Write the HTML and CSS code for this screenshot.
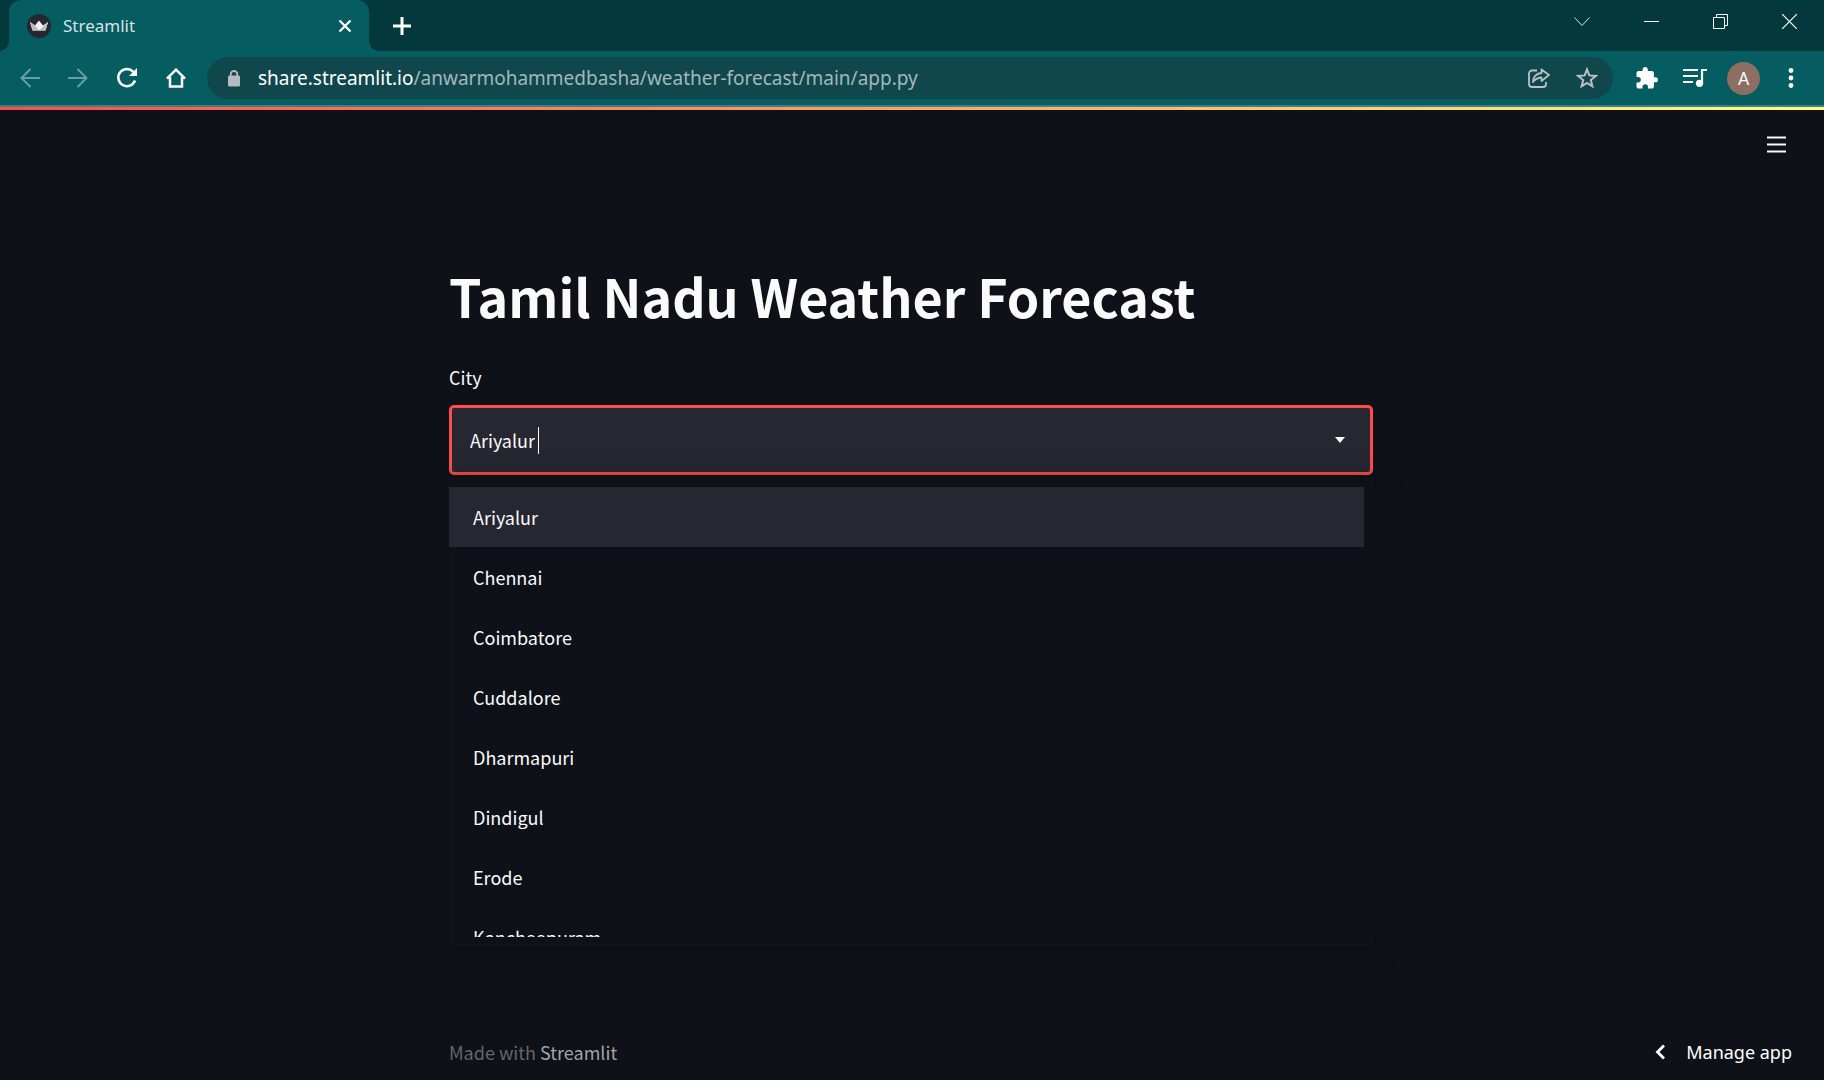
FILE: index.html
```html
<!DOCTYPE html>
<html lang="en">
<head>
<meta charset="utf-8">
<title>Streamlit</title>
<link rel="stylesheet" href="styles.css">
</head>
<body>
<header class="browser">
  <div class="tabstrip">
    <div class="tab">
      <svg class="favicon" width="24" height="24" viewBox="0 0 24 24"><circle cx="12" cy="12" r="12" fill="#262730"/><path d="M3 8 8 11.500 12 6.500l4 5 5-3.500-2.500 8.500H5.500z" fill="#f2f2f2"/><path d="M8 11.500 12 16.500H5.500L3 8zM21 8l-2.500 8.500H12z" fill="#bdbdc0"/></svg>
      <span class="tab-title">Streamlit</span>
      <button class="icon-btn" aria-label="Close tab"><svg width="14" height="14" viewBox="0 0 14 14" stroke="#fff" stroke-width="2.200"><path d="M1.500 1.500l11 11M12.500 1.500l-11 11"/></svg></button>
    </div>
    <button class="icon-btn new-tab" aria-label="New tab"><svg width="18" height="18" viewBox="0 0 18 18" stroke="#fff" stroke-width="3"><path d="M9 0v18M0 9h18"/></svg></button>
    <div class="window-controls">
      <button class="icon-btn" aria-label="Search tabs"><svg width="16" height="10" viewBox="0 0 16 10" fill="none" stroke="#d5dfe0"><path d="M.5.5 8 8.500 15.500.5"/></svg></button>
      <button class="icon-btn" aria-label="Minimize"><svg width="15" height="15" viewBox="0 0 15 15" stroke="#fff"><path d="M0 7.500h15"/></svg></button>
      <button class="icon-btn" aria-label="Restore"><svg width="15" height="15" viewBox="0 0 15 15" fill="none" stroke="#fff"><path d="M.5 3.500h11v11H.5zM3.500 3.500v-3h11v11h-3"/></svg></button>
      <button class="icon-btn" aria-label="Close"><svg width="15" height="15" viewBox="0 0 15 15" stroke="#fff" stroke-width="1.200"><path d="M0 0l15 15M15 0 0 15"/></svg></button>
    </div>
  </div>
  <div class="toolbar">
    <nav class="nav-buttons">
      <button class="icon-btn" aria-label="Back"><svg width="20" height="20" viewBox="0 0 20 20" fill="none" stroke="#699fa1" stroke-width="2"><path d="M20 10H2M10.500 1 1.500 10l9 9"/></svg></button>
      <button class="icon-btn" aria-label="Forward"><svg width="20" height="20" viewBox="0 0 20 20" fill="none" stroke="#699fa1" stroke-width="2"><path d="M0 10h18M9.500 1l9 9-9 9"/></svg></button>
      <button class="icon-btn" aria-label="Reload"><svg width="22" height="22" viewBox="0 0 22 22" fill="none" stroke="#fff" stroke-width="2.500"><path d="M19 13.500A8.600 8.600 0 1 1 17.500 5"/><path d="M21 1v8h-8z" fill="#fff" stroke="none"/></svg></button>
      <button class="icon-btn" aria-label="Home"><svg width="20" height="20" viewBox="0 0 20 20" fill="none" stroke="#fff" stroke-width="2.500"><path d="M1 10.700 10 1.700l9 9M4 9v9.500h12V9"/></svg></button>
    </nav>
    <div class="omnibox">
      <svg width="12" height="17" viewBox="0 0 12 17"><path d="M2.700 7V4.300a3.300 3.300 0 0 1 6.600 0V7" fill="none" stroke="#b4bcbf" stroke-width="1.800"/><rect y="5.500" width="12" height="11" rx="1.500" fill="#b4bcbf"/></svg>
      <a class="url" href="#"><span class="host">share.streamlit.io</span>/anwarmohammedbasha/weather-forecast/main/app.py</a>
      <button class="icon-btn" aria-label="Share"><svg width="22" height="20" viewBox="0 0 22 20" fill="none" stroke="#b9c1c3" stroke-width="1.800" stroke-linejoin="round"><path d="M9 2.500H4a3 3 0 0 0-3 3V16a3 3 0 0 0 3 3h11a3 3 0 0 0 3-3v-2"/><path d="M13.500 1.500 21 7l-7.500 6V9.500C10 9.500 7.500 11 5 14c0-5 3.500-8.800 8.500-9z"/></svg></button>
      <button class="icon-btn" aria-label="Bookmark"><svg width="22" height="22" viewBox="0 0 22 22" fill="none" stroke="#b9c1c3" stroke-width="2"><path d="M11 2.400l2.300 6 6.500.5-5 4.100 1.600 6.400-5.400-3.400-5.400 3.400 1.600-6.400-5-4.100 6.500-.5z"/></svg></button>
    </div>
    <div class="extras">
      <button class="icon-btn" aria-label="Extensions"><svg width="22" height="22" viewBox="1.500 1 21.500 21.500" fill="#fff"><path d="M20.500 11H19V7c0-1.100-.9-2-2-2h-4V3.500a2.500 2.500 0 0 0-5 0V5H4c-1.100 0-2 .9-2 2v3.800h1.500a2.700 2.700 0 0 1 0 5.400H2V20c0 1.100.9 2 2 2h3.800v-1.500a2.700 2.700 0 0 1 5.400 0V22H17c1.100 0 2-.9 2-2v-4h1.500a2.500 2.500 0 0 0 0-5z"/></svg></button>
      <button class="icon-btn" aria-label="Media controls"><svg width="24" height="20" viewBox="0 0 24 20" fill="none" stroke="#fff" stroke-width="2.200"><path d="M0 2h15M0 8h15M0 14h10M24 2h-5v13"/><circle cx="16.500" cy="15.300" r="3.600" fill="#fff" stroke="none"/></svg></button>
      <button class="avatar" aria-label="Profile">A</button>
      <button class="icon-btn" aria-label="Menu"><svg width="6" height="20" viewBox="0 0 6 20" fill="#fff"><circle cx="3" cy="2.500" r="2.400"/><circle cx="3" cy="10" r="2.400"/><circle cx="3" cy="17.500" r="2.400"/></svg></button>
    </div>
  </div>
</header>
<div class="app">
  <div class="decoration"></div>
  <button class="icon-btn app-menu" aria-label="App menu"><svg width="19" height="17" viewBox="0 0 19 17" stroke="#fafafa" stroke-width="2.200"><path d="M0 1.500h19M0 8.500h19M0 15.500h19"/></svg></button>
  <main class="block">
    <h1>Tamil Nadu Weather Forecast</h1>
    <label for="city">City</label>
    <div class="combo">
      <div class="combo-field">
        <input id="city" type="text" role="combobox" aria-expanded="true" aria-controls="cities" value="Ariyalur" autocomplete="off">
        <span class="caret"></span>
        <svg width="10" height="6" viewBox="0 0 10 6" fill="#fafafa"><path d="M0 0h10L5 6z"/></svg>
      </div>
      <div class="popover">
        <ul id="cities" role="listbox">
          <li role="option" aria-selected="true">Ariyalur</li>
          <li role="option">Chennai</li>
          <li role="option">Coimbatore</li>
          <li role="option">Cuddalore</li>
          <li role="option">Dharmapuri</li>
          <li role="option">Dindigul</li>
          <li role="option">Erode</li>
          <li role="option">Kancheepuram</li>
        </ul>
      </div>
    </div>
  </main>
  <footer>
    <p class="made">Made with <a href="#">Streamlit</a></p>
    <button class="manage"><svg width="10" height="16" viewBox="0 0 10 16" fill="none" stroke="#fff" stroke-width="2.800"><path d="M9 1.500 2.500 8 9 14.500"/></svg>Manage app</button>
  </footer>
</div>
</body>
</html>
```
FILE: styles.css
```css
* { box-sizing: border-box; }
body {
  margin: 0;
  min-height: 100vh;
  display: flex;
  flex-direction: column;
  background: #0e1117;
  color: #fafafa;
  font: 18px/24px "Noto Sans CJK JP", "Source Sans Pro", sans-serif;
}
button { border: 0; padding: 0; background: none; color: inherit; font: inherit; }
.icon-btn { display: flex; align-items: center; justify-content: center; }
svg { display: block; flex: none; }

/* Browser window */
.browser {
  background: #055c61;
  border-bottom: 2px solid #3b8084;
  font-family: "Noto Sans", sans-serif;
}
.tabstrip {
  display: flex;
  align-items: center;
  height: 51px;
  padding-left: 9px;
  background: #03383c;
}
.tab {
  position: relative;
  display: flex;
  align-items: center;
  gap: 12px;
  width: 360px;
  height: 51px;
  padding: 0 17px 0 18px;
  border-radius: 12px 12px 0 0;
  background: #055c61;
}
.tab::before, .tab::after {
  content: "";
  position: absolute;
  bottom: 0;
  width: 10px;
  height: 10px;
}
.tab::before { left: -10px; background: radial-gradient(circle at 0 0, transparent 10px, #055c61 10px); }
.tab::after { right: -10px; background: radial-gradient(circle at 100% 0, transparent 10px, #055c61 10px); }
.tab-title { flex: 1; font-size: 17px; color: #d5e3e4; }
.new-tab { margin-left: 24px; }
.window-controls {
  display: flex;
  align-items: center;
  align-self: flex-start;
  gap: 54px;
  height: 43px;
  margin-left: auto;
  padding-right: 27px;
}
.toolbar { display: flex; align-items: center; height: 54px; padding: 0 30px 0 20px; }
.nav-buttons { display: flex; align-items: center; gap: 28px; width: 187px; }
.omnibox {
  flex: 1;
  display: flex;
  align-items: center;
  gap: 26px;
  height: 42px;
  padding: 0 15px 0 21px;
  border-radius: 21px;
  background: #0f474d;
}
.url { flex: 1; margin-left: -8px; font-size: 19px; color: #a3b8bb; text-decoration: none; }
.host { color: #fff; }
.extras { display: flex; align-items: center; gap: 25px; padding-left: 23px; }
.avatar {
  width: 33px;
  height: 33px;
  margin: 0 3px 0 -5px;
  border-radius: 50%;
  background: #8d6e63;
  font: 18px/33px Roboto, sans-serif;
}

/* Streamlit app */
.app { flex: 1; display: flex; flex-direction: column; }
.decoration { height: 3px; background: linear-gradient(90deg, #ff4b4b, #fffd80); }
.app-menu { align-self: flex-end; margin: 26px 38px 0 0; }
.block { width: 100%; max-width: 926px; margin: 0 auto; padding: 110px 2px 0 0; }
h1 { margin: 0; font-size: 52px; line-height: 66px; font-weight: 700; }
label { display: block; margin: 36px 0 16px; }
.combo { position: relative; }
.combo-field {
  display: flex;
  align-items: center;
  height: 70px;
  padding: 0 25px 0 18px;
  border: 3px solid #ff4b4b;
  border-radius: 5px;
  background: #262730;
}
.combo-field input {
  field-sizing: content;
  border: 0;
  padding: 0;
  outline: 0;
  background: none;
  color: inherit;
  font: inherit;
}
.caret { width: 1px; height: 27px; margin: 0 auto 0 3px; background: #fafafa; }
.popover {
  position: absolute;
  top: 72px;
  left: 0;
  right: 0;
  padding: 10px 0;
  background: #0e1117;
  box-shadow: 0 5px 20px rgba(14, 14, 14, 0.7);
}
ul { height: 450px; margin: 0; padding: 0 9px 0 0; overflow: hidden; list-style: none; }
li { height: 60px; padding: 0 24px; line-height: 60px; }
li[aria-selected="true"] { background: #262730; }
footer {
  display: flex;
  align-items: center;
  justify-content: space-between;
  margin-top: auto;
  padding: 0 32px 16px calc(50% - 463px);
}
.made { margin: 0; color: #65676b; }
.made a { color: #a3a4a7; text-decoration: none; }
.manage { display: flex; align-items: center; gap: 21px; font: 18px/24px "Noto Sans", sans-serif; color: #fff; }
```
